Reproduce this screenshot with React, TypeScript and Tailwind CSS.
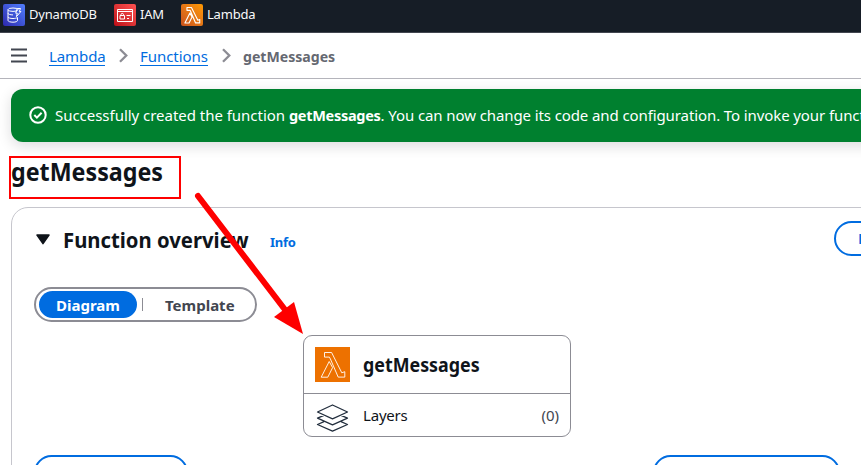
import type { ReactNode } from "react";

const lambdaPath =
  "M9.5 5.5h7.1l10.2 20.3 3-1.1v5.4h-6.6L15.4 12l-1-1.9H9.5zM14.2 14.5l3.4 6.1-4.8 9.6H6.2z";

function LambdaGlyph({ className, stroke }: { className: string; stroke: number }) {
  return (
    <svg viewBox="0 0 35 35" className={className} fill="none" stroke="white" strokeWidth={stroke} strokeLinejoin="round">
      <path d={lambdaPath} />
    </svg>
  );
}

function Service({ label, tile, children }: { label: string; tile: string; children: ReactNode }) {
  return (
    <div className="flex items-start gap-1">
      <span className={"flex size-[22px] items-center justify-center rounded-[2px] " + tile}>{children}</span>
      <span className="w-max text-[13px] leading-5 tracking-[-0.2px] text-[#f9f9fa]">{label}</span>
    </div>
  );
}

function Chevron() {
  return (
    <svg className="h-[15px] w-[9px]" viewBox="0 0 9 15" fill="none" stroke="#8c8c94" strokeWidth="2.3">
      <path d="M1 1.2l6.3 6.3L1 13.8" />
    </svg>
  );
}

export default function App() {
  return (
    <div className="relative h-[465px] w-[861px] overflow-hidden bg-white font-['Noto_Sans',sans-serif] text-[#0f141a]">
      <nav className="flex h-[33px] items-start gap-[17px] border-b border-[#424650] bg-[#161d26] pt-1 pl-[3px]">
        <div className="w-[94px]">
          <Service label="DynamoDB" tile="bg-linear-to-tr from-[#2e27ad] to-[#527fff]">
            <svg viewBox="0 0 22 22" className="size-[22px]" fill="none" stroke="white" strokeWidth="1">
              <ellipse cx="10" cy="5.7" rx="5" ry="1.7" />
              <path d="M5 5.7v10.7c0 1 2.2 1.8 5 1.8s4.5-.8 4.5-1.8v-3M5 9.2c0 1 2.2 1.7 5 1.7M5 12.8c0 1 2.2 1.7 5 1.7 1.8 0 3.5-.3 4.3-.9M14.2 4.5h3.3l-1.2 3h1.6l-4.5 5.2.9-3.5h-1.6z" />
            </svg>
          </Service>
        </div>
        <div className="w-[50px]">
          <Service label="IAM" tile="bg-linear-to-tr from-[#bd0816] to-[#ff5252]">
            <svg viewBox="0 0 22 22" className="size-[22px]" fill="none" stroke="white" strokeWidth="1">
              <path d="M3.5 5.5h15v12h-15zM3.5 7.5h15M6 11.5h4.5v3.5H6zM7 11.5v-1c0-1.5 2.5-1.5 2.5 0v1M12.5 11.5h4M13 14.5h2" />
            </svg>
          </Service>
        </div>
        <Service label="Lambda" tile="bg-linear-to-tr from-[#c8511b] to-[#ff9900]">
          <LambdaGlyph className="size-[22px]" stroke={1.8} />
        </Service>
      </nav>

      <header className="flex h-[46px] items-center border-b border-[#b4b4bb] pl-[11px]">
        <svg className="h-[15px] w-4" viewBox="0 0 16 15" stroke="#424650" strokeWidth="2">
          <path d="M0 1.5h16M0 7.5h16M0 13.5h16" />
        </svg>
        <a className="mt-px ml-[22px] h-[20px] w-[56px] border-b border-[#006ce0] text-[15px] leading-5 tracking-[-0.1px] whitespace-nowrap text-[#006ce0]">Lambda</a>
        <span className="ml-[14px]"><Chevron /></span>
        <a className="mt-px ml-[12px] h-[20px] w-[68px] border-b border-[#006ce0] text-[15px] leading-5 tracking-[-0.05px] whitespace-nowrap text-[#006ce0]">Functions</a>
        <span className="ml-[14px]"><Chevron /></span>
        <span className="ml-[12px] origin-left scale-x-[0.94] text-[15px] leading-5 font-bold text-[#656871]">getMessages</span>
      </header>

      <main className="pt-[10px] pl-[11px]">
        <div className="flex h-[53px] w-[1000px] items-center rounded-xl bg-[#00802f] pl-[18px] text-white shadow-[0_4px_14px_rgba(0,7,22,0.14)]">
          <svg className="-mt-px size-[18px]" viewBox="0 0 18 18" fill="none" stroke="white" strokeWidth="2">
            <circle cx="9" cy="9" r="7.7" />
            <path d="M5.3 9l2.6 2.6 4.7-4.8" />
          </svg>
          <p className="-mt-[2px] ml-[8px] text-[15px] leading-5 tracking-[-0.1px] whitespace-nowrap">
            <span className="tracking-[-0.03px]">Successfully created the function </span>
            <b className="text-[14.5px] tracking-[-0.28px]">getMessages</b>. You can now change its code and configuration. To invoke your function
          </p>
        </div>

        <h1 className="mt-[13px] h-[33px] w-max origin-left scale-x-[0.93] text-[25px] leading-8 font-bold">getMessages</h1>

        <section className="mt-[19px] h-[400px] w-[1000px] rounded-[17px] border border-[#c6c6cd]">
          <div className="flex h-[61px] items-center pl-6">
            <svg className="mt-px h-[11px] w-[14px]" viewBox="0 0 14 11">
              <path d="M1 1h12L7 9.6z" fill="#0f141a" stroke="#0f141a" strokeWidth="1.5" strokeLinejoin="round" />
            </svg>
            <div className="ml-[13px] w-[185px]">
              <h2 className="w-max origin-left scale-x-[0.922] text-[22px] leading-7 font-bold whitespace-nowrap">Function overview</h2>
            </div>
            <a className="mt-[6px] ml-[22px] w-[26px] text-[13px] leading-5 font-bold tracking-[-0.3px] text-[#006ce0]">Info</a>
            <button className="ml-[538px] h-[35px] w-[120px] rounded-full border-2 border-[#006ce0] pl-[22px] text-left text-[15px] font-bold text-[#006ce0]">Export</button>
          </div>

          <div className="mt-[18px] ml-[22px] flex h-[35px] w-[223px] items-center rounded-full border-2 border-[#8c8c94] pl-[3px] text-[15px] font-bold">
            <span className="flex h-[27px] w-[98px] items-center justify-center rounded-full bg-[#006ce0] pt-[2px] text-white">Diagram</span>
            <span className="ml-[5px] h-[13px] w-px bg-[#8c8c94]" />
            <span className="ml-[22px] pt-[2px] text-[#424650]">Template</span>
          </div>

          <div className="mt-[13px] ml-[291px] h-[102px] w-[268px] rounded-[9px] border border-[#8c8c94]">
            <div className="flex h-[58px] items-center border-b border-[#8c8c94] pl-[11px]">
              <span className="size-[35px] bg-[#ed7100]"><LambdaGlyph className="size-[35px]" stroke={0.9} /></span>
              <strong className="ml-[13px] origin-left scale-x-[0.915] text-[19.5px] leading-6">getMessages</strong>
            </div>
            <div className="flex h-[43px] items-center pr-[11px] pl-[12px] text-[15px]">
              <svg className="mt-1 h-[28px] w-[33px]" viewBox="0 0 33 28" fill="none" stroke="#232f3e" strokeWidth="1.3" strokeLinejoin="round">
                <path d="M16.5 1L31.5 8 16.5 14.8 1.5 8zM8 11.3l-6.5 2.8 15 6.8 15-6.8-6.5-2.8M8 17.7l-6.5 2.8 15 6.7 15-6.7-6.5-2.8" />
              </svg>
              <span className="ml-[14px] tracking-[-0.2px]">Layers</span>
              <span className="ml-auto text-[#424650]">(0)</span>
            </div>
          </div>

          <div className="mt-[18px] ml-[22px] flex gap-[465px]">
            <button className="h-[35px] w-[154px] rounded-full border-2 border-[#006ce0]" />
            <button className="h-[35px] w-[187px] rounded-full border-2 border-[#006ce0]" />
          </div>
        </section>
      </main>

      <div className="absolute top-[156px] left-[9px] h-[43px] w-[172px] border-2 border-[#fe0000]" />
      <svg className="absolute top-[190px] left-[190px] h-[146px] w-[116px]" viewBox="190 190 116 146">
        <path d="M198 196L286 311" stroke="#fe0000" strokeWidth="6" strokeLinecap="round" />
        <path d="M303 334L294 302 274 317z" fill="#fe0000" />
      </svg>
    </div>
  );
}
